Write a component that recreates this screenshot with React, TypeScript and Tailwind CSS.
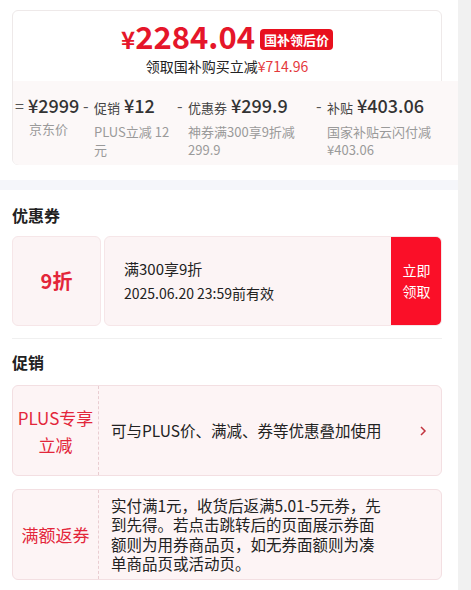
import React from 'react';

const items = [
  { op: '=', label: '', value: '¥2999', desc: '京东价', w: 'w-[68px]', dw: 'w-[54px]' },
  { op: '-', label: '促销', value: '¥12', desc: 'PLUS立减 12 元', w: 'w-[94px]', dw: 'w-[78px]' },
  { op: '-', label: '优惠券', value: '¥299.9', desc: '神券满300享9折减 299.9', w: 'w-[139px]', dw: 'w-[112px]' },
  { op: '-', label: '补贴', value: '¥403.06', desc: '国家补贴云闪付减 ¥403.06', w: 'w-[140px]', dw: 'w-[110px]' },
];

const App: React.FC = () => {
  return (
    <div className="flex w-[471px] h-[590px] overflow-hidden bg-white text-[#333] font-['Noto_Sans_CJK_SC',sans-serif]">
      <div className="w-[458px] shrink-0">
        {/* Price card */}
        <div className="pt-[10px] pl-3">
          <div className="w-[430px] h-[155px] rounded-md border border-[#eee9e9]">
            <div className="h-[70px] flex flex-col items-center pt-[9px]">
              <div className="flex items-baseline h-[32px]">
                <span className="text-[#e5162a] font-bold text-[24px] leading-[32px]">¥</span>
                <span className="text-[#e5162a] font-bold text-[31px] leading-[32px]">2284.04</span>
                <span className="self-start ml-[5px] mt-[9px] h-[21px] px-[4px] rounded-sm bg-[#e8101e] text-white text-[13px] font-bold leading-[21px]">
                  国补领后价
                </span>
              </div>
              <div className="mt-[4px] text-[14px] leading-[20px] text-[#222]">
                领取国补购买立减<span className="text-[#e4393c]">¥714.96</span>
              </div>
            </div>
            {/* Breakdown */}
            <div className="w-[446px] h-[84px] bg-[#fcf8f8] rounded-bl-md flex pt-[12px] pl-[2px]">
              {items.map((it, i) => (
                <div key={i} className={`${it.w} shrink-0 flex`}>
                  <span className="w-[11px] shrink-0 text-[16px] leading-[24px] text-[#555]">{it.op}</span>
                  <div className="min-w-0">
                    <div className="flex items-baseline whitespace-nowrap leading-[24px]">
                      {it.label && <span className="text-[13px] text-[#444] mr-[4px]">{it.label}</span>}
                      <span className={`text-[18px] font-medium text-[#333] ${i === 0 ? 'ml-[2px]' : ''}`}>{it.value}</span>
                    </div>
                    <div className={`${it.dw} mt-[3px] text-[13px] leading-[18px] text-[#9a9a9a] ${i === 0 ? 'ml-[3px]' : ''}`}>
                      {it.desc}
                    </div>
                  </div>
                </div>
              ))}
            </div>
          </div>
        </div>

        <div className="mt-[15px] h-[10px] bg-[#f5f6fa]" />

        {/* Coupons */}
        <div className="px-3">
          <h2 className="mt-[14px] text-[16px] leading-[22px] font-bold text-[#222]">优惠券</h2>
          <div className="mt-[10px] w-[430px] flex gap-[3px] h-[90px]">
            <div className="w-[89px] shrink-0 rounded-md border border-[#f6e6e8] bg-[#fcf4f5] flex items-center justify-center">
              <span className="text-[20px] font-bold text-[#e3263a]">9折</span>
            </div>
            <div className="flex-1 flex rounded-md border border-[#f6e6e8] bg-[#fcf4f5] overflow-hidden">
              <div className="flex-1 flex flex-col justify-center pl-[19px]">
                <div className="text-[15px] leading-[22px] text-[#222]">满300享9折</div>
                <div className="mt-[2px] text-[14px] leading-[22px] text-[#222]">2025.06.20 23:59前有效</div>
              </div>
              <div className="w-[51px] -my-px -mr-px bg-[#fa0f28] flex items-center justify-center">
                <span className="text-white text-[14px] leading-[21px] text-center">立即<br />领取</span>
              </div>
            </div>
          </div>
          <div className="mt-[12px] w-[430px] h-px bg-[#f0f0f0]" />

          {/* Promotions */}
          <h2 className="mt-[12px] text-[16px] leading-[22px] font-bold text-[#222]">促销</h2>
          <div className="mt-[12px] w-[430px] h-[91px] flex rounded-md border border-[#f3dfe2] bg-[#fdf4f5]">
            <div className="w-[86px] shrink-0 border-r border-dashed border-[#e9cdd1] flex items-center justify-center">
              <span className="text-[17px] leading-[27px] text-[#e3263a] text-center">PLUS专享<br />立减</span>
            </div>
            <div className="flex-1 flex items-center pl-[12px] pr-[12px]">
              <span className="flex-1 text-[15.5px] text-[#222]">可与PLUS价、满减、券等优惠叠加使用</span>
              <svg width="8" height="12" viewBox="0 0 8 12" className="mr-[2px]">
                <path d="M2 2l4 4-4 4" fill="none" stroke="#c2343f" strokeWidth="1.5" />
              </svg>
            </div>
          </div>
          <div className="mt-[13px] w-[430px] h-[91px] flex rounded-md border border-[#f3dfe2] bg-[#fdf4f5]">
            <div className="w-[86px] shrink-0 border-r border-dashed border-[#e9cdd1] flex items-center justify-center">
              <span className="text-[17px] leading-[27px] text-[#e3263a]">满额返券</span>
            </div>
            <div className="flex-1 flex items-center pl-[12px]">
              <p className="w-[300px] text-[15.5px] leading-[19.5px] text-[#222]">
                实付满1元，收货后返满5.01-5元券，先<br />
                到先得。若点击跳转后的页面展示券面<br />
                额则为用券商品页，如无券面额则为凑<br />
                单商品页或活动页。
              </p>
            </div>
          </div>
        </div>
      </div>
      <div className="w-[13px] shrink-0 bg-[#f1f1f1]" />
    </div>
  );
};

export default App;
